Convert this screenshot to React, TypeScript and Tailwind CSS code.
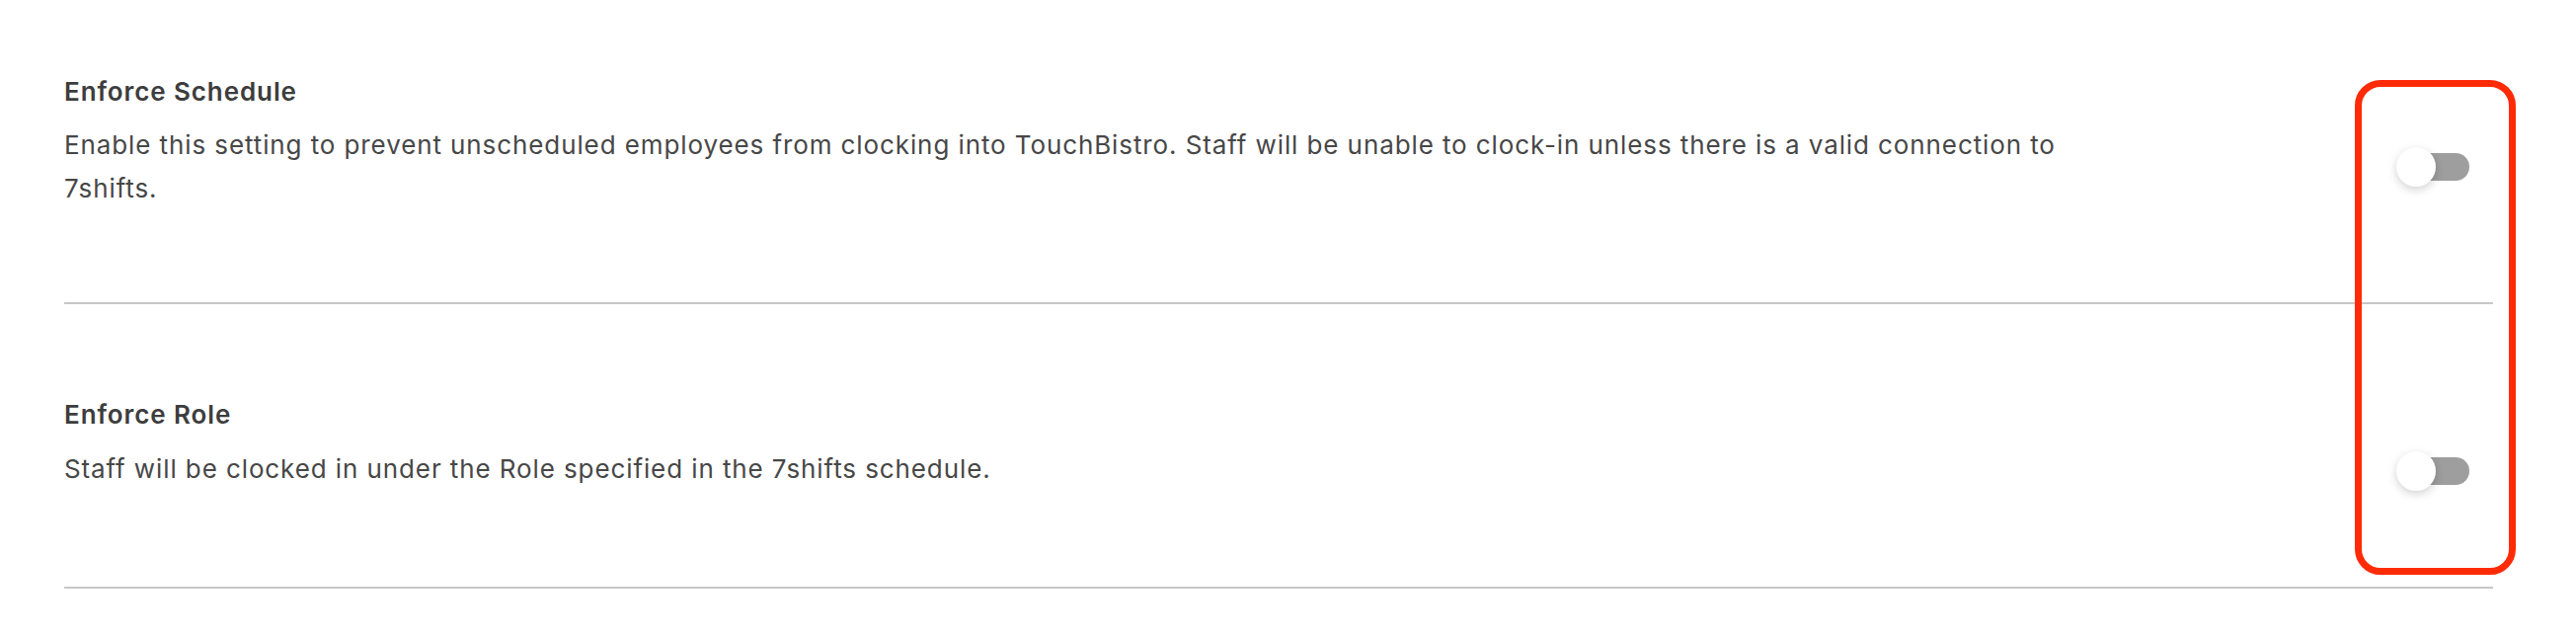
import React from "react";

function Toggle() {
  return (
    <div className="relative w-[74px] h-[40px]">
      <div className="absolute left-[6px] top-[6px] w-[68px] h-[28px] rounded-full bg-[#9e9e9e]" />
      <div className="absolute left-0 top-0 w-[40px] h-[40px] rounded-full bg-white shadow-[0_3px_10px_rgba(0,0,0,0.18)]" />
    </div>
  );
}

export default function App() {
  return (
    <div
      className="relative w-[2609px] h-[646px] bg-white pl-[65px] pr-[84px] tracking-[0.9px]"
      style={{ fontFamily: "Inter, 'Open Sans', sans-serif" }}
    >
      <div className="flex flex-col">
        <div className="flex justify-between border-b-2 border-[#c7c7c7] h-[308px]">
          <div className="pt-[75px] flex flex-col max-w-[2080px]">
            <div className="text-[26px] leading-[36px] font-semibold text-[#3d3d3d]">Enforce Schedule</div>
            <div className="mt-[14px] text-[26px] leading-[44px] text-[#474747]">
              Enable this setting to prevent unscheduled employees from clocking into TouchBistro. Staff will be unable to clock-in unless there is a valid connection to 7shifts.
            </div>
          </div>
          <div className="pt-[149px] pr-[24px] shrink-0">
            <Toggle />
          </div>
        </div>
        <div className="flex justify-between border-b-2 border-[#c7c7c7] h-[288px]">
          <div className="pt-[94px] flex flex-col max-w-[2080px]">
            <div className="text-[26px] leading-[36px] font-semibold text-[#3d3d3d]">Enforce Role</div>
            <div className="mt-[15px] text-[26px] leading-[44px] text-[#474747]">
              Staff will be clocked in under the Role specified in the 7shifts schedule.
            </div>
          </div>
          <div className="pt-[149px] pr-[24px] shrink-0">
            <Toggle />
          </div>
        </div>
      </div>
      <div className="absolute left-[2385px] top-[81px] w-[163px] h-[501px] border-[7px] border-[#ff2b06] rounded-[26px]" />
    </div>
  );
}
